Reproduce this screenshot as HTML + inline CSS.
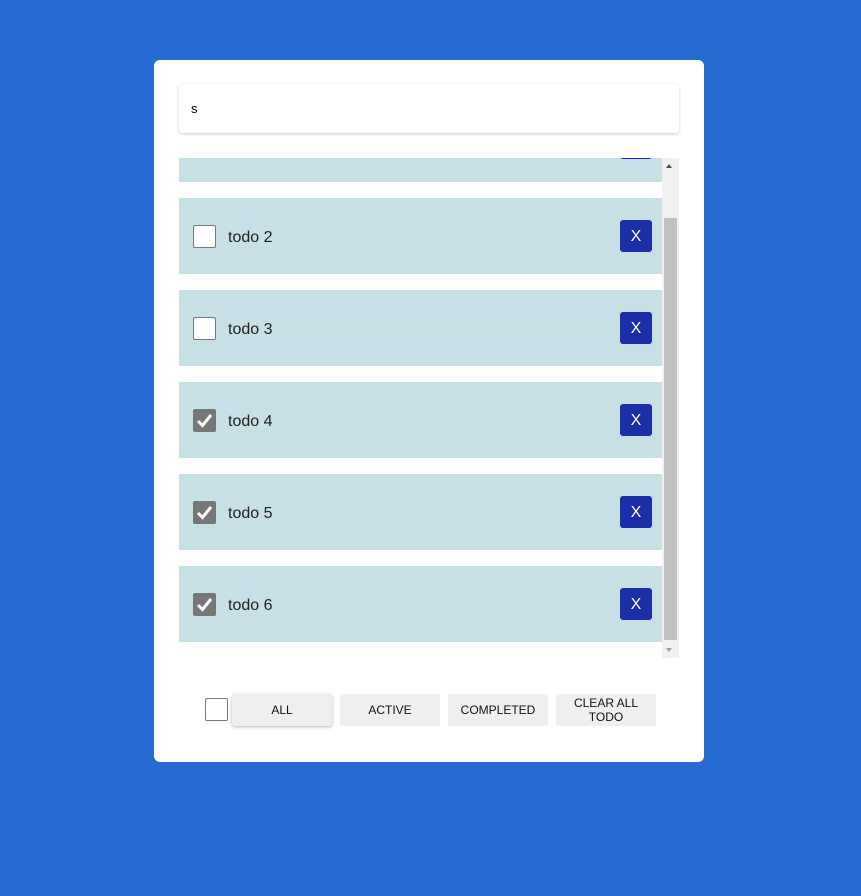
<!DOCTYPE html>
<html><head><style>
body{margin:0;width:861px;height:896px;background:#276bd2;font-family:"Liberation Sans",sans-serif;position:relative;overflow:hidden}
.a{position:absolute}
.card{left:154px;top:60px;width:550px;height:702px;background:#fff;border-radius:6px}
.inp{left:179px;top:84px;width:500px;height:49px;background:#fff;border-radius:3px;box-shadow:0 1px 3px rgba(0,0,0,.2);font-size:13px;line-height:50px;padding-left:12px;box-sizing:border-box}
.item{left:179px;width:483px;height:76px;background:#c7e0e5}
.cb{width:21px;height:21px;border:1px solid #777;border-radius:2px;background:#fff}
.cbc{width:23px;height:23px;background:#777;border-radius:2px}
.t{font-size:16px;color:#222}
.x{width:32px;height:32px;background:#1a2ea8;border-radius:3px;color:#fff;font-size:16px;text-align:center;line-height:33px}
.btn{top:694px;width:100px;height:32px;background:#efefef;border-radius:3px;font-size:12px;text-align:center;color:#111;display:flex;align-items:center;justify-content:center;line-height:14px}
</style></head><body>
<div class="a card"></div>
<div class="a" style="left:179px;top:138px;width:500px;height:20px;background:#fff"></div>
<div class="a" style="left:662px;top:158px;width:17px;height:500px;background:#f1f1f1"></div>
<div class="a" style="left:664px;top:218px;width:13px;height:422px;background:#c1c1c1"></div>
<div class="a" style="left:666px;top:164px;width:0;height:0;border-left:3px solid transparent;border-right:3px solid transparent;border-bottom:4px solid #505050"></div>
<div class="a" style="left:666px;top:648px;width:0;height:0;border-left:3px solid transparent;border-right:3px solid transparent;border-top:4px solid #a0a0a0"></div>
<div class="a item" style="top:158px;height:24px"></div>
<div class="a x" style="left:620px;top:150px;height:9px"></div>
<div class="a" style="left:179px;top:138px;width:500px;height:20px;background:#fff"></div>
<div class="a inp">s</div>

<div class="a item" style="top:198px"></div>
<div class="a cb" style="left:193px;top:225px"></div><div class="a t" style="left:228px;top:229px">todo 2</div><div class="a x" style="left:620px;top:220px">X</div>
<div class="a item" style="top:290px"></div>
<div class="a cb" style="left:193px;top:317px"></div><div class="a t" style="left:228px;top:321px">todo 3</div><div class="a x" style="left:620px;top:312px">X</div>
<div class="a item" style="top:382px"></div>
<div class="a cbc" style="left:193px;top:409px"><svg width="23" height="23"><path d="M5 12l4.5 4.5L18 6" stroke="#fff" stroke-width="3" fill="none"/></svg></div><div class="a t" style="left:228px;top:413px">todo 4</div><div class="a x" style="left:620px;top:404px">X</div>
<div class="a item" style="top:474px"></div>
<div class="a cbc" style="left:193px;top:501px"><svg width="23" height="23"><path d="M5 12l4.5 4.5L18 6" stroke="#fff" stroke-width="3" fill="none"/></svg></div><div class="a t" style="left:228px;top:505px">todo 5</div><div class="a x" style="left:620px;top:496px">X</div>
<div class="a item" style="top:566px"></div>
<div class="a cbc" style="left:193px;top:593px"><svg width="23" height="23"><path d="M5 12l4.5 4.5L18 6" stroke="#fff" stroke-width="3" fill="none"/></svg></div><div class="a t" style="left:228px;top:597px">todo 6</div><div class="a x" style="left:620px;top:588px">X</div>

<div class="a cb" style="left:205px;top:698px"></div>
<div class="a btn" style="left:232px;box-shadow:0 1px 3px rgba(0,0,0,.3)">ALL</div>
<div class="a btn" style="left:340px">ACTIVE</div>
<div class="a btn" style="left:448px">COMPLETED</div>
<div class="a btn" style="left:556px">CLEAR ALL<br>TODO</div>
</body></html>
